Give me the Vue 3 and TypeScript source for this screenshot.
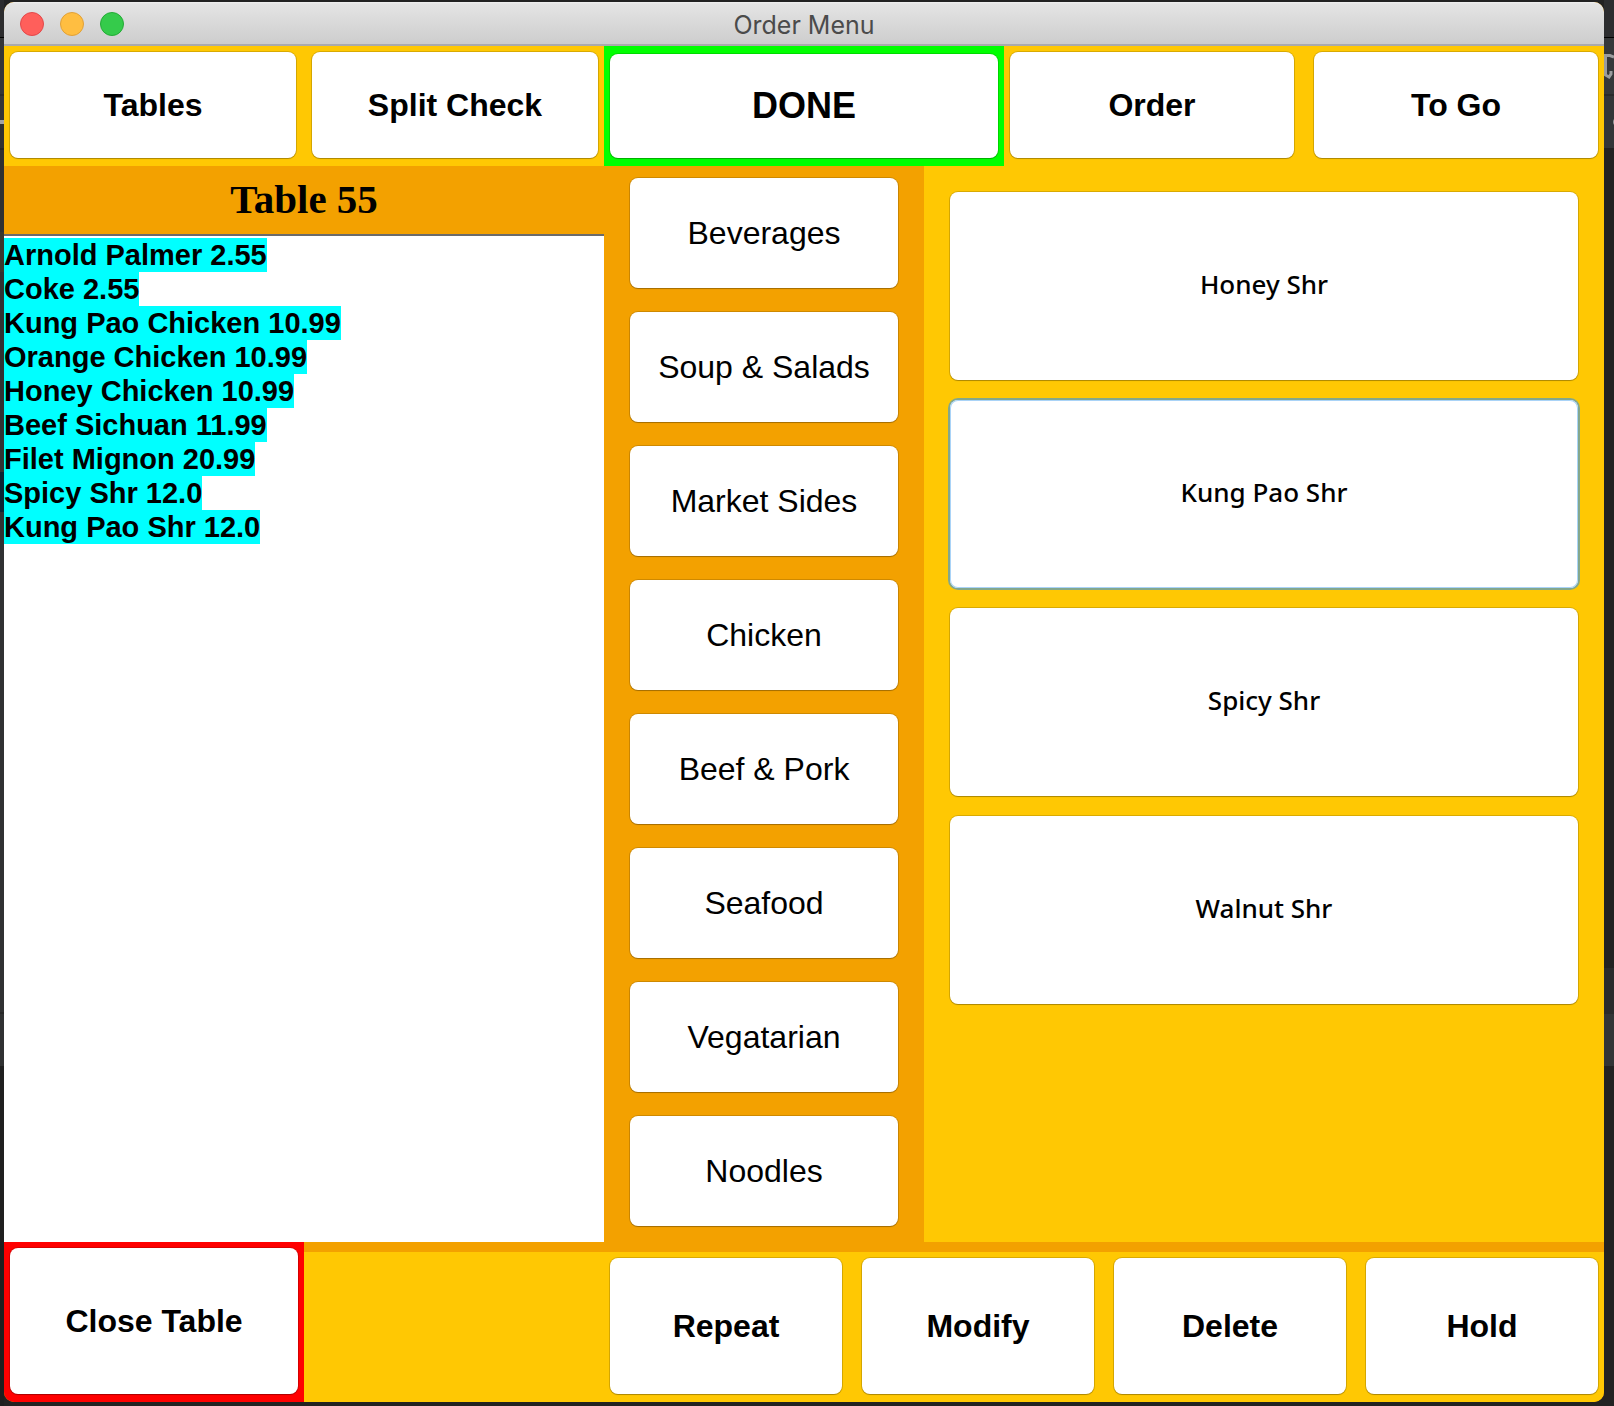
<script setup lang="ts">
import { ref } from 'vue'

interface OrderLine {
  name: string
  price: string
}

const tableNumber = ref(55)

const orderLines = ref<OrderLine[]>([
  { name: 'Arnold Palmer', price: '2.55' },
  { name: 'Coke', price: '2.55' },
  { name: 'Kung Pao Chicken', price: '10.99' },
  { name: 'Orange Chicken', price: '10.99' },
  { name: 'Honey Chicken', price: '10.99' },
  { name: 'Beef Sichuan', price: '11.99' },
  { name: 'Filet Mignon', price: '20.99' },
  { name: 'Spicy Shr', price: '12.0' },
  { name: 'Kung Pao Shr', price: '12.0' },
])

const categories: string[] = [
  'Beverages',
  'Soup & Salads',
  'Market Sides',
  'Chicken',
  'Beef & Pork',
  'Seafood',
  'Vegatarian',
  'Noodles',
]

const items: string[] = ['Honey Shr', 'Kung Pao Shr', 'Spicy Shr', 'Walnut Shr']
const activeItem = ref('Kung Pao Shr')

const actions: string[] = ['Repeat', 'Modify', 'Delete', 'Hold']
</script>

<template>
  <div class="desktop">
    <div class="strip strip-left" aria-hidden="true"></div>
    <div class="window">
      <header class="titlebar">
        <div class="lights">
          <button type="button" class="light red" aria-label="Close"></button>
          <button type="button" class="light amber" aria-label="Minimize"></button>
          <button type="button" class="light green" aria-label="Zoom"></button>
        </div>
        <h1 class="title">Order Menu</h1>
      </header>

      <nav class="topbar">
        <div class="group left-group">
          <button type="button" class="key bold">Tables</button>
          <button type="button" class="key bold">Split Check</button>
        </div>
        <div class="done">
          <button type="button" class="key bold big">DONE</button>
        </div>
        <div class="group right-group">
          <button type="button" class="key bold">Order</button>
          <button type="button" class="key bold">To Go</button>
        </div>
      </nav>

      <main class="main">
        <section class="check">
          <h2 class="check-title">Table {{ tableNumber }}</h2>
          <ul class="lines">
            <li v-for="line in orderLines" :key="line.name">
              <span>{{ line.name }} {{ line.price }}</span>
            </li>
          </ul>
        </section>

        <section class="categories">
          <button v-for="category in categories" :key="category" type="button" class="key">
            {{ category }}
          </button>
        </section>

        <section class="items">
          <button
            v-for="item in items"
            :key="item"
            type="button"
            class="key item"
            :class="{ active: item === activeItem }"
            @click="activeItem = item"
          >
            {{ item }}
          </button>
        </section>
      </main>

      <footer class="footer">
        <div class="close-table">
          <button type="button" class="key bold">Close Table</button>
        </div>
        <div class="actions">
          <button v-for="action in actions" :key="action" type="button" class="key bold">
            {{ action }}
          </button>
        </div>
      </footer>
    </div>
    <div class="strip strip-right" aria-hidden="true">
      <svg class="fragment" width="10" height="140" viewBox="0 0 10 140">
        <path d="M0 55.5H6L10 57M1.5 56V75L5 77L7 74V71" fill="none" stroke="#9a9c9e" stroke-width="3" />
        <circle cx="14" cy="122" r="4" fill="none" stroke="#9a9c9e" stroke-width="2" />
      </svg>
    </div>
  </div>
</template>

<style>
body {
  margin: 0;
  background: #232323;
}
</style>

<style scoped>
.desktop {
  box-sizing: border-box;
  min-height: 100vh;
  display: grid;
  grid-template-columns: 4px minmax(0, 1fr) 10px;
  background: #222222;
}

.strip-left {
  background: linear-gradient(
    #2c2c2e 37px, #000000 37px 38px, #353637 38px 94px, #2b2b2c 94px 96px,
    #353637 96px 120px, #a4a4a4 120px 124px, #303132 124px 148px, #262626 148px 150px,
    #303132 150px 232px, #3a372d 232px 272px, #303132 272px 472px, #0b2434 472px 512px,
    #303132 512px 1012px, #272727 1012px 1014px, #303132 1014px 1066px, #1f1f1f 1066px
  );
}

.strip-right {
  background: linear-gradient(
    #2c2d2f 37px, #000000 37px 38px, #35383a 38px 94px, #292b2c 94px 96px,
    #333638 96px 148px, #222222 148px 968px, #2a2b2c 968px 1014px,
    #323536 1014px 1066px, #222222 1066px
  );
}

.fragment {
  display: block;
}

.window {
  margin: 2px 0 4px;
  display: flex;
  flex-direction: column;
  overflow: hidden;
  border-radius: 10px;
  background: #f3a100;
}

.titlebar {
  box-sizing: border-box;
  min-height: 44px;
  padding: 2px 16px 0;
  display: grid;
  grid-template-columns: 1fr auto 1fr;
  align-items: center;
  background: linear-gradient(#f0f0f0, #e4e4e4 2px, #cdcdcd);
  border-bottom: 2px solid #aaaaac;
}

.lights {
  display: flex;
  gap: 16px;
}

.light {
  box-sizing: border-box;
  width: 24px;
  height: 24px;
  padding: 0;
  border: 1px solid;
  border-radius: 50%;
}

.red {
  background: #ff5f5b;
  border-color: #e2484a;
}

.amber {
  background: #ffbe41;
  border-color: #e0a038;
}

.green {
  background: #35cb4b;
  border-color: #24ab36;
}

.title {
  margin: 0;
  padding-top: 2px;
  font: 400 25px/32px Inter, sans-serif;
  color: #4b4b4b;
}

.key {
  min-width: 0;
  padding: 0;
  border: 0;
  border-radius: 8px;
  background: #ffffff;
  color: #000000;
  font: 400 32px/36px 'Liberation Sans', Arial, sans-serif;
  box-shadow: 0 0 0 1px rgba(0, 0, 0, 0.15), 0 1px 1px rgba(0, 0, 0, 0.2);
  cursor: pointer;
}

.bold {
  font-weight: 700;
}

.big {
  font-size: 36px;
}

.topbar {
  display: grid;
  grid-template-columns: minmax(0, 3fr) minmax(0, 2fr) minmax(0, 3fr);
  min-height: 120px;
  background: #ffc803;
}

.group {
  display: grid;
  grid-template-columns: 1fr 1fr;
  padding: 6px 6px 8px;
}

.left-group {
  gap: 16px;
}

.right-group {
  gap: 20px;
}

.done {
  display: grid;
  padding: 8px 6px;
  background: #00ff00;
}

.main {
  flex: 1;
  display: grid;
  grid-template-columns: minmax(0, 15fr) minmax(0, 8fr) minmax(0, 17fr);
}

.check {
  display: flex;
  flex-direction: column;
}

.check-title {
  margin: 0;
  padding: 9px 0 11px;
  font: 700 41px/46px 'Liberation Serif', 'Times New Roman', serif;
  line-height: 48px;
  text-align: center;
  border-bottom: 2px solid #6b6b6b;
}

.lines {
  flex: 1;
  margin: 0;
  padding: 2px 0;
  list-style: none;
  background: #ffffff;
  font: 700 29px/34px 'Liberation Sans', Arial, sans-serif;
  color: #000000;
}

.lines li {
  display: flex;
}

.lines span {
  background: #00ffff;
}

.categories {
  display: grid;
  grid-auto-rows: minmax(110px, 1fr);
  gap: 24px;
  padding: 12px 26px 16px;
}

.items {
  display: grid;
  grid-auto-rows: 188px;
  align-content: start;
  gap: 20px;
  padding: 26px;
  background: #ffc803;
}

.item {
  padding-bottom: 4px;
  font: 500 26px/36px 'Noto Sans', sans-serif;
}

.item.active {
  box-shadow: inset 0 0 0 1px #a9d3f7, 0 0 0 2px #83a78c;
}

.footer {
  display: grid;
  grid-template-columns: minmax(0, 3fr) minmax(0, 13fr);
  min-height: 160px;
}

.close-table {
  display: grid;
  padding: 6px 6px 8px;
  background: #ff0000;
}

.actions {
  display: grid;
  grid-template-columns: repeat(4, 1fr);
  gap: 20px;
  padding: 6px 6px 8px calc(3 / 13 * 100% + 6px);
  border-top: 10px solid #f3a100;
  background: #ffc803;
}
</style>
